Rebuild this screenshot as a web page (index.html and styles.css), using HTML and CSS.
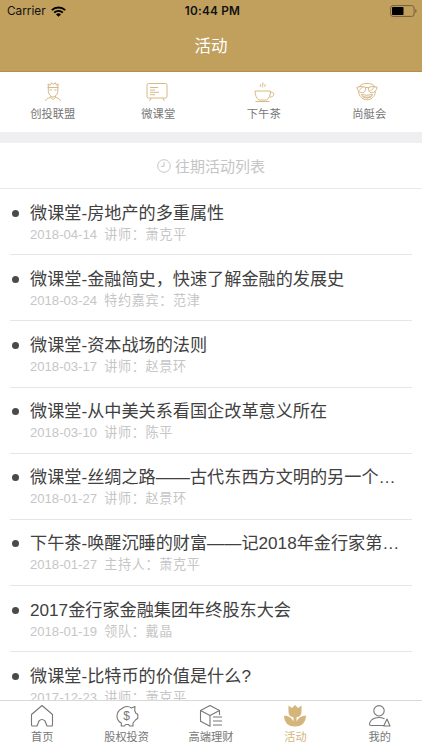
FILE: index.html
```html
<!DOCTYPE html>
<html lang="zh-CN">
<head>
<meta charset="utf-8">
<title>活动</title>
<link rel="stylesheet" href="styles.css">
</head>
<body>
<div class="app">
  <header class="header">
    <div class="status">
      <div class="carrier">Carrier
        <svg width="15" height="11" viewBox="0 0 15 11"><g fill="none" stroke="#000" stroke-width="1.9"><path d="M.8 4.2C4.5.5 10.500.5 14.200 4.200"/><path d="M3.200 6.700C5.600 4.300 9.400 4.300 11.800 6.700"/></g><path d="M5 8.400Q7.500 6.300 10 8.400L7.500 10.800Z"/></svg>
      </div>
      <div class="time">10:44 PM</div>
      <svg class="battery" width="27" height="12" viewBox="0 0 27 12"><rect x=".6" y=".6" width="23.500" height="10.800" rx="2.400" fill="none" stroke="#75603a"/><rect x="2" y="2" width="11.500" height="8" rx=".8"/><path d="M25.300 4v4q1.300-.6 1.300-2t-1.300-2" fill="#75603a"/></svg>
    </div>
    <h1 class="title">活动</h1>
  </header>
  <nav class="shortcuts">
    <a class="shortcut"><svg width="22" height="20" viewBox="0 0 22 20"><path d="M6.500 5.500 6 2l2.300 1.200L9.500.8l1.600 1.500L13.500.8l.8 2.400L16.200 2l-.6 3.500M5.500 5.500h11M6.300 5.500v4c0 2.500 2.600 5.500 4.800 5.500s4.700-3 4.700-5.500v-4M7.500 8h2.300m2.500 0h2.300M8.800 14v1.500C5.500 16 4 17 3.700 19M13.400 14v1.500c3.300.5 4.600 1.500 5 3.500M8.800 15.500l2.300 2 2.300-2"/></svg><span>创投联盟</span></a>
    <a class="shortcut"><svg class="board" width="22" height="20" viewBox="0 0 22 20"><rect x="1" y="1.500" width="20" height="14.500" rx="1.500"/><path d="M4 5.500h8M4 8h5M4 10.300h9M4 12.700h5M5 16l-1.300 3M17 16l1.300 3"/></svg><span>微课堂</span></a>
    <a class="shortcut"><svg width="22" height="20" viewBox="0 0 22 20"><path d="M2 9h15.500c0 4-1.500 7.500-4 9H6C3.500 16.500 2 13 2 9ZM17.300 11c1-1.300 3.700-.8 3.500 1.200-.1 2.300-2.500 3.200-4.300 2.800M2.500 19.500h14M7.500 5c-1-1.200.8-1.600 0-3M9.800 5.500c-1.400-1.500 1-2.700 0-5M12 5c-1-1.200.8-1.600 0-3"/></svg><span>下午茶</span></a>
    <a class="shortcut"><svg class="face" width="22" height="20" viewBox="0 0 22 20"><path d="M3 5C5.500.2 16.500.2 19 5M2.500 9.500C3.500 20.500 18.500 20.500 19.500 9.500M.8 5.200Q5 3.800 9.500 5.200c.6 2.800-.8 5.600-3 5.600C3.500 10.800 1.200 8 .8 5.200ZM21.200 5.200Q17 3.800 12.500 5.200c-.6 2.800.8 5.600 3 5.600 3 0 5.300-2.800 5.700-5.600ZM9.500 5.700q1.500-.7 3 0M5.500 12.500q5.500 1.500 11 0c-1 4.700-10 4.700-11 0ZM6.500 14.700q4.500 1 9 0M3 8.500 6.500 5M14 9.500 18.500 5"/></svg><span>尚艇会</span></a>
  </nav>
  <main class="content">
    <h2 class="heading"><svg width="14" height="14" viewBox="0 0 14 14"><circle cx="7" cy="7" r="6.300"/><path d="M7 3v4.300H3.800"/></svg><span>往期活动列表</span></h2>
    <ul class="list">
      <li class="item"><h3>微课堂-房地产的多重属性</h3><p>2018-04-14&nbsp; <span>讲师：萧克平</span></p></li>
      <li class="item"><h3>微课堂-金融简史，快速了解金融的发展史</h3><p>2018-03-24&nbsp; <span>特约嘉宾：范津</span></p></li>
      <li class="item"><h3>微课堂-资本战场的法则</h3><p>2018-03-17&nbsp; <span>讲师：赵景环</span></p></li>
      <li class="item"><h3>微课堂-从中美关系看国企改革意义所在</h3><p>2018-03-10&nbsp; <span>讲师：陈平</span></p></li>
      <li class="item"><h3>微课堂-丝绸之路——古代东西方文明的另一个…</h3><p>2018-01-27&nbsp; <span>讲师：赵景环</span></p></li>
      <li class="item"><h3>下午茶-唤醒沉睡的财富——记2018年金行家第…</h3><p>2018-01-27&nbsp; <span>主持人：萧克平</span></p></li>
      <li class="item"><h3>2017金行家金融集团年终股东大会</h3><p>2018-01-19&nbsp; <span>领队：戴晶</span></p></li>
      <li class="item"><h3>微课堂-比特币的价值是什么?</h3><p>2017-12-23&nbsp; <span>讲师：萧克平</span></p></li>
    </ul>
  </main>
  <nav class="tabs">
    <a class="tab"><svg width="24" height="24" viewBox="0 0 24 24"><path d="M1.500 10.500 12 1.500l10.500 9v10.500q0 1-1 1h-4.500l-2-5q-3-3-6 0l-2 5H2.500q-1 0-1-1Z"/></svg><span>首页</span></a>
    <a class="tab"><svg width="24" height="24" viewBox="0 0 24 24"><path d="M7 4.500C10 2 14 2.500 16.500 4L20 2.500l-.3 4 1.300 3 1.800.8v4L20.500 16 18 19v3h-3.500l-.8-1.500h-3L9.500 22H6.300v-3C.5 16 .3 8 7 4.500Z"/><text x="11.500" y="16" text-anchor="middle">$</text></svg><span>股权投资</span></a>
    <a class="tab"><svg width="24" height="24" viewBox="0 0 24 24"><path d="M20.500 11V6.500L11 1.500 1.500 6.500v10.800l9.500 5V11.500l9.500-5M1.500 6.500l9.500 5M14 13h9M14 17h9M14 21h9"/></svg><span>高端理财</span></a>
    <a class="tab active"><svg width="24" height="24" viewBox="0 0 24 24"><path d="M5.500 1.500 9 4l3-3 3 3 3.500-2.500V8c0 3-2 5-5 5.200v4.500c1.500-4 5-6.200 9.500-6-.2 6-3.500 10.800-11 10.800S1.200 17.700 1 11.700c4.500-.2 8 2 9.500 6v-4.500c-3-.2-5-2.200-5-5.200Z"/></svg><span>活动</span></a>
    <a class="tab"><svg width="24" height="24" viewBox="0 0 24 24"><circle cx="11" cy="6.800" r="5.200"/><path d="M16.500 14.800C10.500 12 2.500 14 1.500 20q0 1.500 1.500 1.500h12.500M19 15l-3.300 7H22Z"/></svg><span>我的</span></a>
  </nav>
</div>
</body>
</html>
```
FILE: styles.css
```css
* { box-sizing: border-box; margin: 0; padding: 0; }
body { background: #fff; font-family: "Liberation Sans", "Noto Sans CJK SC", sans-serif; }
.app { width: 422px; height: 750px; display: flex; flex-direction: column; overflow: hidden; }
svg { display: block; flex: none; }

.header { height: 72px; flex: none; background: #c1a05e; border-bottom: 1px solid #b98e4b; }
.status { height: 22px; display: grid; grid-template-columns: 1fr auto 1fr; align-items: center; padding: 0 5px 0 7px; font: 12px/22px Inter, sans-serif; color: #111; }
.carrier { display: flex; align-items: center; gap: 5px; font-size: 11.800px; }
.time { font-size: 11.800px; font-weight: 600; letter-spacing: .2px; padding-left: 1px; }
.battery { justify-self: end; }
.title { text-align: center; color: #fff; font-size: 16.500px; font-weight: 400; line-height: 24px; padding-top: 12px; }

.shortcuts { height: 60px; flex: none; display: grid; grid-template-columns: repeat(4, 1fr); }
.shortcut { display: flex; flex-direction: column; align-items: center; padding-top: 10px; gap: 3px; font-size: 11.300px; line-height: 18px; color: #777; }
.shortcut svg { fill: none; stroke: #d6b985; stroke-width: 1; stroke-linejoin: round; }
.shortcut .board { margin-right: 2px; }
.shortcut .face { margin-right: 4px; }

.content { flex: 1; min-height: 0; overflow: hidden; border-top: 11px solid #efeff1; }
.heading { height: 46px; display: flex; align-items: center; justify-content: center; gap: 4px; border-bottom: 1px solid #e9e9e9; font-size: 15px; font-weight: 400; color: #c5c5c5; }
.heading svg { fill: none; stroke: #c5c5c5; }
.list { list-style: none; padding: 0 10px; }
.item { position: relative; height: 66.200px; padding: 10.500px 0 0 20px; border-bottom: 1px solid #e6e6e6; white-space: nowrap; }
.item::before { content: ""; position: absolute; left: 2px; top: 20.500px; width: 7px; height: 7px; border-radius: 50%; background: #4a4a4a; }
.item h3 { font-size: 17.150px; font-weight: 400; line-height: 26px; color: #404040; }
.item p { font-size: 13.100px; line-height: 18px; color: #c6c6c6; }
.item p span { letter-spacing: .65px; }

.tabs { height: 50px; flex: none; display: grid; grid-template-columns: repeat(5, 1fr); border-top: 1px solid #d9d9d9; background: #fff; }
.tab { display: flex; flex-direction: column; align-items: center; padding-top: 3px; font-size: 11.200px; line-height: 18px; color: #777; }
.tab svg { fill: none; stroke: #777; stroke-width: 1.100; stroke-linejoin: round; }
.tab text { font-size: 12px; fill: #777; stroke: none; }
.tab.active { color: #d4b57c; }
.tab.active svg { fill: #d4b57c; stroke: none; }
```
